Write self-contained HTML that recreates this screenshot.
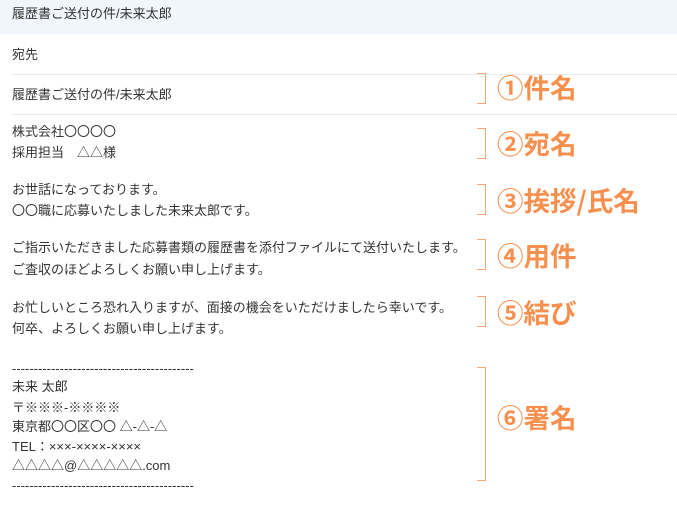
<!DOCTYPE html>
<html><head><meta charset="utf-8"><style>
body{margin:0;width:677px;height:512px;background:#fff;font-family:"Liberation Sans","Noto Sans CJK JP",sans-serif;color:#333;font-size:13px;position:relative;overflow:hidden}
.t{position:absolute;left:12px;white-space:nowrap;line-height:20px}
.hdr{position:absolute;left:0;top:0;width:677px;height:34px;background:#f1f5fc}
.ln{position:absolute;left:12px;right:0;height:1px;background:#e8e8e8}
.br{position:absolute;left:477px;width:8px;border:1.5px solid #f8a874;border-left:none}
.lb{position:absolute;left:497px;color:#f7904f;font-weight:bold;font-size:26.5px;line-height:30px;white-space:nowrap;font-family:"Noto Sans CJK JP",sans-serif}
</style></head><body>
<div class="hdr"></div>
<div class="t" style="top:4px">履歴書ご送付の件/未来太郎</div>
<div class="t" style="top:45px">宛先</div>
<div class="ln" style="top:74px"></div>
<div class="t" style="top:85px">履歴書ご送付の件/未来太郎</div>
<div class="ln" style="top:114px"></div>
<div class="t" style="top:122px">株式会社〇〇〇〇</div>
<div class="t" style="top:143px">採用担当　△△様</div>
<div class="t" style="top:180px">お世話になっております。</div>
<div class="t" style="top:201px">〇〇職に応募いたしました未来太郎です。</div>
<div class="t" style="top:238px">ご指示いただきました応募書類の履歴書を添付ファイルにて送付いたします。</div>
<div class="t" style="top:260px">ご査収のほどよろしくお願い申し上げます。</div>
<div class="t" style="top:298px">お忙しいところ恐れ入りますが、面接の機会をいただけましたら幸いです。</div>
<div class="t" style="top:319px">何卒、よろしくお願い申し上げます。</div>
<div class="t" style="top:359px">------------------------------------------</div>
<div class="t" style="top:377px">未来 太郎</div>
<div class="t" style="top:398px">〒※※※-※※※※</div>
<div class="t" style="top:417px">東京都〇〇区〇〇 △-△-△</div>
<div class="t" style="top:437px">TEL：×××-××××-××××</div>
<div class="t" style="top:456px">△△△△@△△△△△.com</div>
<div class="t" style="top:476px">------------------------------------------</div>
<div class="br" style="top:73px;height:29px"></div>
<div class="br" style="top:128px;height:29px"></div>
<div class="br" style="top:184px;height:29px"></div>
<div class="br" style="top:239px;height:29px"></div>
<div class="br" style="top:296px;height:29px"></div>
<div class="br" style="top:367px;height:112px"></div>
<div class="lb" style="top:72px">①件名</div>
<div class="lb" style="top:128px">②宛名</div>
<div class="lb" style="top:185px">③挨拶/氏名</div>
<div class="lb" style="top:240px">④用件</div>
<div class="lb" style="top:297px">⑤結び</div>
<div class="lb" style="top:402px">⑥署名</div>
</body></html>
